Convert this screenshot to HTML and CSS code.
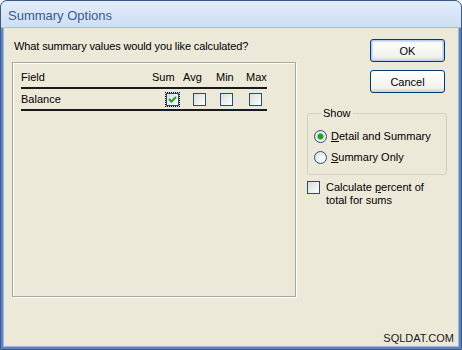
FILE: index.html
```html
<!DOCTYPE html>
<html>
<head>
	<title>Summary Options</title>
	<link rel="stylesheet" href="styles.css">
</head>
<body>
	<div class="window">
		<div class="titlebar">Summary Options</div>

		<div class="client">
			<div class="main-col">
				<div class="prompt">What summary values would you like calculated?</div>
				<div class="listbox">
					<div class="list-header">
						<span>Field</span>
						<span>Sum</span>
						<span>Avg</span>
						<span>Min</span>
						<span>Max</span>
					</div>
					<div class="list-row">
						<span>Balance</span>
						<span class="check checked focused"></span>
						<span class="check"></span>
						<span class="check"></span>
						<span class="check"></span>
					</div>
				</div>
			</div>

			<div class="side-col">
				<button class="btn btn-default">OK</button>
				<button class="btn">Cancel</button>

				<fieldset class="group">
					<legend>Show</legend>
					<div class="radio-row">
						<span class="radio selected"></span>
						<span><u>D</u>etail and Summary</span>
					</div>
					<div class="radio-row">
						<span class="radio"></span>
						<span><u>S</u>ummary Only</span>
					</div>
				</fieldset>

				<div class="check-row">
					<span class="check"></span>
					<span>Calculate <u>p</u>ercent of<br>total for sums</span>
				</div>
			</div>

			<div class="watermark">SQLDAT.COM</div>
		</div>
	</div>
</body>
</html>
```

FILE: styles.css
```css
* {
	margin: 0;
	padding: 0;
	box-sizing: border-box;
}
body {
	width: 462px;
	height: 350px;
	background-color: #fff;
	font-family: 'Liberation Sans', Arial, sans-serif;
	font-size: 11px;
	line-height: 13px;
	color: #000;
}
.window {
	display: flex;
	flex-direction: column;
	height: 350px;
	border: 1px solid #3c5a8a;
	border-radius: 7px 7px 0 0;
	background-color: #5c83c6;
	overflow: hidden;
}
.titlebar {
	height: 27px;
	padding: 6px 0 0 7px;
	font-family: 'Liberation Sans', Arial, sans-serif;
	font-size: 13px;
	line-height: 17px;
	color: #3e5a8e;
	background: linear-gradient(#e3edf9, #cddff5);
	border-bottom: 1px solid #a4bfe4;
}
.client {
	position: relative;
	flex: 1;
	display: flex;
	gap: 11px;
	margin: 0 2px 2px 2px;
	padding: 11px 0 0 8px;
	background-color: #ece9d8;
	border: 1px solid #9fb6de;
	border-top: none;
}
.main-col {
	display: flex;
	flex-direction: column;
}
.prompt {
	margin: 1px 0 0 2px;
	height: 13px;
	letter-spacing: -0.12px;
}
.listbox {
	width: 284px;
	height: 235px;
	margin-top: 9px;
	padding: 0 0 0 8px;
	border: 1px solid #aca899;
	box-shadow: 1px 1px 0 #fff, inset 1px 1px 0 #fff;
}
.list-header {
	display: grid;
	grid-template-columns: 131px 31px 33px 30px 21px;
	width: 246px;
	padding: 8px 0 3px 0;
	border-bottom: 2px solid #1a1a1a;
}
.list-row {
	display: grid;
	grid-template-columns: 145px 27px 27px 29px 18px;
	align-items: center;
	width: 246px;
	padding: 4px 0 3px 0;
	border-bottom: 2px solid #1a1a1a;
}
.check {
	display: block;
	width: 13px;
	height: 13px;
	border: 1px solid #1c5180;
	background: linear-gradient(135deg, #dcdcd7, #fff);
}
.check.checked {
	background:
		url("data:image/svg+xml,%3Csvg xmlns='http://www.w3.org/2000/svg' width='11' height='11'%3E%3Cpath d='M2 5 L4.5 7.5 L9 3' fill='none' stroke='%2321a121' stroke-width='2'/%3E%3C/svg%3E") center no-repeat,
		linear-gradient(135deg, #dcdcd7, #fff);
}
.check.focused {
	outline: 1px dotted #000;
	outline-offset: 0;
}
.side-col {
	display: flex;
	flex-direction: column;
	width: 140px;
}
.btn {
	align-self: flex-end;
	width: 75px;
	height: 23px;
	margin-right: 2px;
	font-family: inherit;
	font-size: 11px;
	color: #000;
	border: 1px solid #003c74;
	border-radius: 3px;
	background: linear-gradient(#fff, #f3f2ec 80%, #d6d0c5);
}
.btn + .btn {
	margin-top: 8px;
}
.btn-default {
	box-shadow: inset 0 0 0 1px #b5cdf2, inset 0 0 0 2px #cfdff7;
}
.group {
	margin-top: 14px;
	padding: 6px 0 6px 6px;
	border: 1px solid #d0d0bf;
	border-radius: 3px;
}
.group legend {
	margin-left: 7px;
	padding: 0 2px;
}
.radio-row {
	display: flex;
	align-items: center;
	gap: 4px;
	height: 21px;
}
.radio {
	display: block;
	width: 13px;
	height: 13px;
	border: 1px solid #1c5180;
	border-radius: 50%;
	background: radial-gradient(circle at 65% 65%, #fff, #dcdcd7);
}
.radio.selected {
	background: radial-gradient(circle, #21a121 0 2.5px, #6fd06f 3px, transparent 3.5px), radial-gradient(circle at 65% 65%, #fff, #dcdcd7);
}
.check-row {
	display: flex;
	gap: 6px;
	margin-top: 6px;
}
.watermark {
	position: absolute;
	right: 4px;
	bottom: 1px;
	font-family: 'Liberation Sans', Arial, sans-serif;
	font-size: 11px;
	color: #1a1a1a;
}
```
